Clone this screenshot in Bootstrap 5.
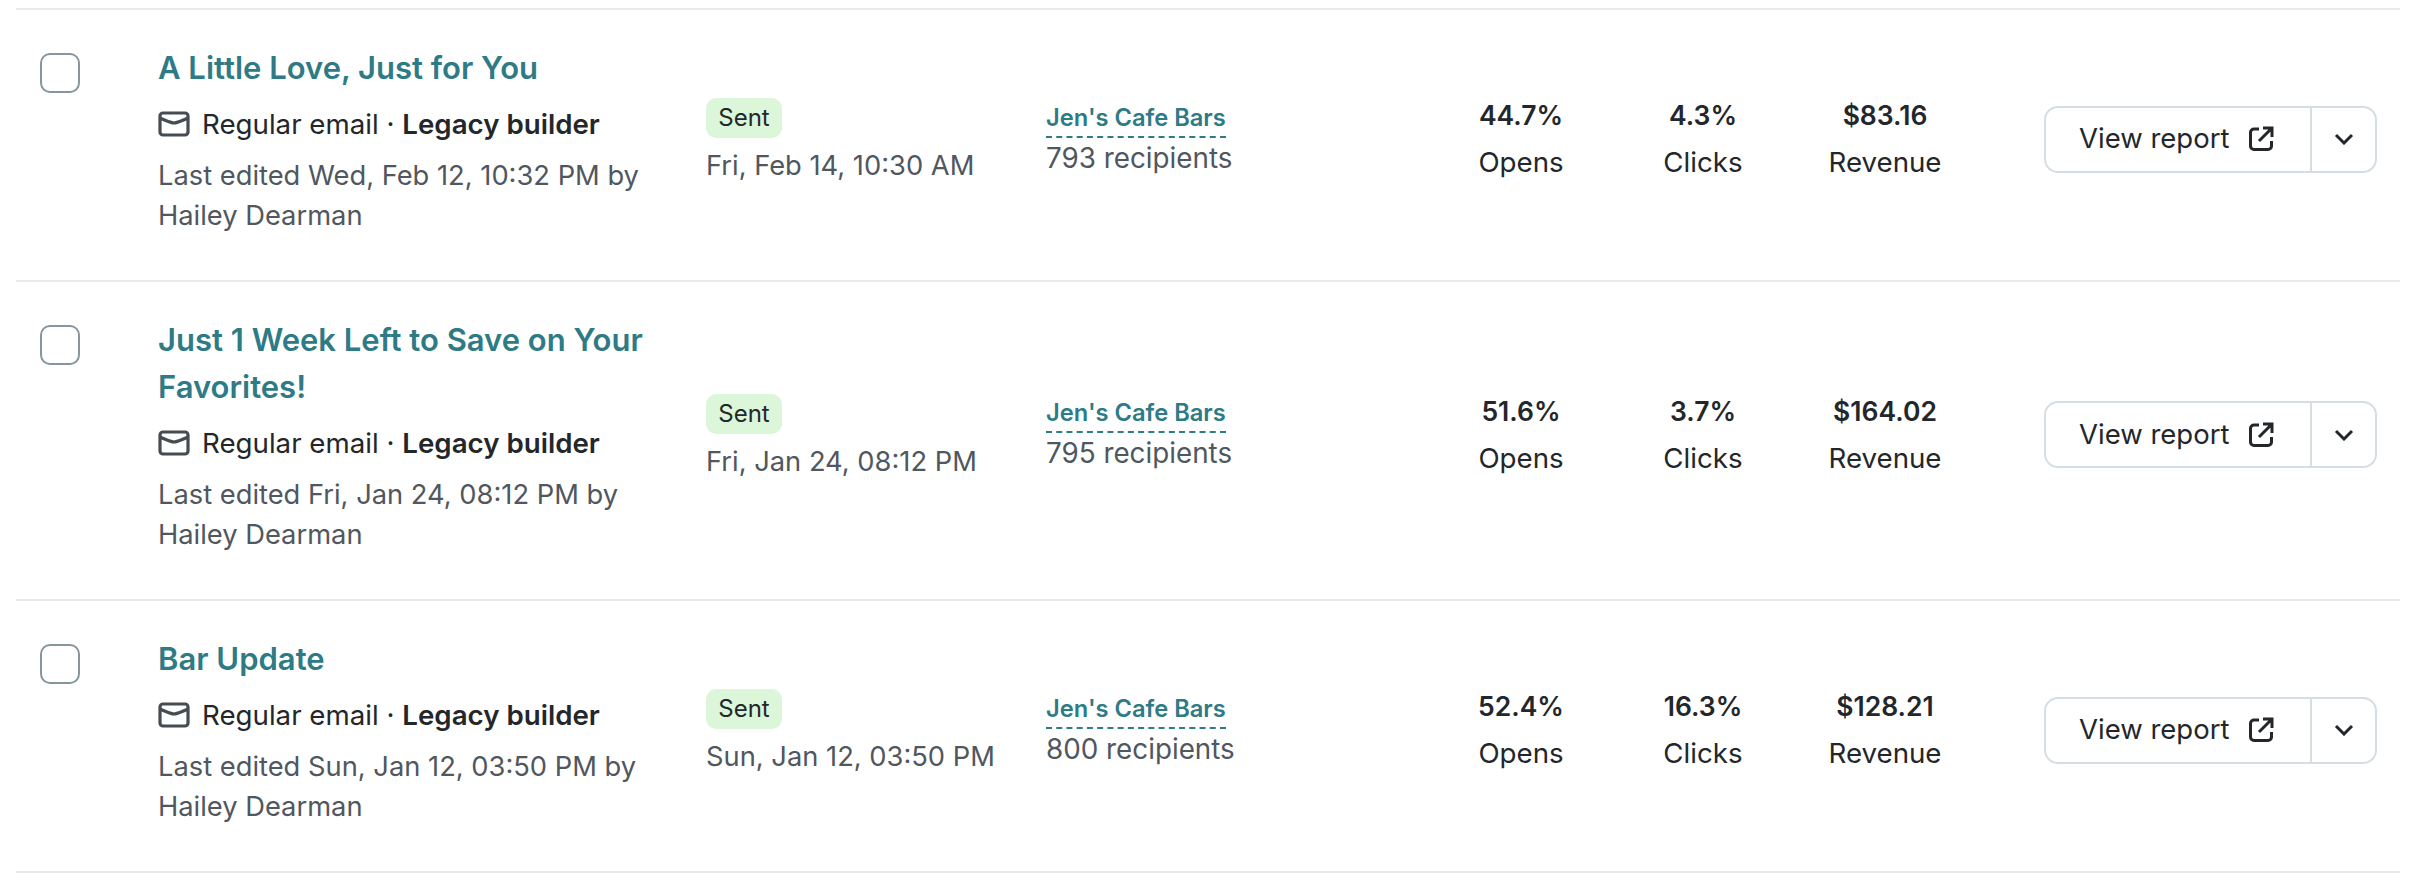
<!DOCTYPE html>
<html>
  <head>
    <title>Campaigns</title>
    <link rel="stylesheet" href="https://cdn.jsdelivr.net/npm/bootstrap@5.3.3/dist/css/bootstrap.min.css" />
    <style>
      body {
        font-family: Inter, "Liberation Sans", sans-serif;
        color: #23272b;
        background: #fff;
      }
      .camp-list {
        margin: 8px 36px 0 16px;
        border-top: 2px solid #e6ebef;
      }
      .camp-row {
        border-bottom: 2px solid #e6ebef;
        padding-left: 24px;
      }
      .camp-check {
        width: 40px;
        height: 40px;
        margin-top: 43px;
        margin-right: 78px;
        border: 2px solid #87959e;
        border-radius: 10px;
        flex: none;
      }
      .camp-main {
        width: 548px;
        flex: none;
        padding: 34px 0 44px;
      }
      .camp-title {
        font-size: 31px;
        font-weight: 600;
        line-height: 47px;
        color: #2e7b86;
        width: 500px;
      }
      .camp-type {
        font-size: 27.7px;
        line-height: 42px;
        margin-top: 12px;
      }
      .type-icon {
        margin-right: 12px;
      }
      .camp-edited {
        font-size: 27.3px;
        line-height: 40px;
        color: #50575e;
        margin-top: 11px;
        width: 490px;
      }
      .camp-status {
        width: 340px;
        flex: none;
        padding-bottom: 6px;
      }
      .sent-tag {
        width: 76px;
        height: 40px;
        background: #dcf6da;
        border-radius: 10px;
        font-size: 24px;
      }
      .camp-date {
        font-size: 27.3px;
        line-height: 40px;
        color: #50575e;
        margin-top: 8px;
      }
      .camp-aud {
        width: 384px;
        flex: none;
        padding-bottom: 12px;
      }
      .aud-name {
        font-size: 23.7px;
        font-weight: 600;
        line-height: 33px;
        padding-bottom: 2px;
        color: #2e7b86;
        border-bottom: 2px dashed #2e7b86;
      }
      .aud-count {
        font-size: 27.8px;
        line-height: 40px;
        color: #50575e;
      }
      .camp-stat {
        width: 182px;
        flex: none;
        padding-bottom: 12px;
        text-align: center;
        font-size: 27.7px;
        line-height: 47px;
      }
      .camp-stat b {
        display: block;
        font-size: 26.5px;
        font-weight: 600;
      }
      .camp-btns {
        width: 333px;
        height: 67px;
        margin-left: 68px;
        margin-bottom: 12px;
        border: 2px solid #d6dee3;
        border-radius: 14px;
        flex: none;
        font-size: 27.5px;
      }
      .btn-report {
        width: 266px;
        padding-left: 33px;
        border-right: 2px solid #d6dee3;
        gap: 19px;
      }
      .btn-more {
        flex: 1;
      }
    </style>
  </head>
  <body>
    <div class="camp-list" id="list"></div>

    <script>
      const campaigns = [
        {
          title: "A Little Love, Just for You",
          edited: "Last edited Wed, Feb 12, 10:32 PM by Hailey Dearman",
          date: "Fri, Feb 14, 10:30 AM",
          count: "793 recipients",
          opens: "44.7%",
          clicks: "4.3%",
          revenue: "$83.16",
        },
        {
          title: "Just 1 Week Left to Save on Your Favorites!",
          edited: "Last edited Fri, Jan 24, 08:12 PM by Hailey Dearman",
          date: "Fri, Jan 24, 08:12 PM",
          count: "795 recipients",
          opens: "51.6%",
          clicks: "3.7%",
          revenue: "$164.02",
        },
        {
          title: "Bar Update",
          edited: "Last edited Sun, Jan 12, 03:50 PM by Hailey Dearman",
          date: "Sun, Jan 12, 03:50 PM",
          count: "800 recipients",
          opens: "52.4%",
          clicks: "16.3%",
          revenue: "$128.21",
        },
      ];

      const list = document.querySelector("#list");

      for (let i = 0; i < campaigns.length; i++) {
        const c = campaigns[i];
        const row = document.createElement("div");
        row.className = "camp-row d-flex align-items-center";
        row.innerHTML = `
          <div class="camp-check align-self-start"></div>
          <div class="camp-main">
            <div class="camp-title">${c.title}</div>
            <div class="camp-type d-flex align-items-center">
              <svg class="type-icon" width="32" height="26" viewBox="0 0 32 26" fill="none" stroke="#454c53" stroke-width="3.200">
                <rect x="2" y="2" width="28" height="22" rx="3"></rect>
                <path d="M2 7 C9 10 12 12 16 12 C20 12 23 10 30 7"></path>
              </svg>
              <span>Regular email · <span class="fw-semibold">Legacy builder</span></span>
            </div>
            <div class="camp-edited">${c.edited}</div>
          </div>
          <div class="camp-status">
            <div class="sent-tag d-flex align-items-center justify-content-center">Sent</div>
            <div class="camp-date">${c.date}</div>
          </div>
          <div class="camp-aud">
            <div><span class="aud-name d-inline-block">Jen's Cafe Bars</span></div>
            <div class="aud-count">${c.count}</div>
          </div>
          <div class="camp-stat"><b>${c.opens}</b>Opens</div>
          <div class="camp-stat"><b>${c.clicks}</b>Clicks</div>
          <div class="camp-stat"><b>${c.revenue}</b>Revenue</div>
          <div class="camp-btns d-flex">
            <div class="btn-report d-flex align-items-center">
              <span>View report</span>
              <svg width="26" height="26" viewBox="0 0 26 26" fill="none" stroke="#23272b" stroke-width="3">
                <path d="M11 3 H6 a3.500 3.500 0 0 0 -3.500 3.500 V20 a3.500 3.500 0 0 0 3.500 3.500 H20 a3.500 3.500 0 0 0 3.500 -3.500 V15"></path>
                <path d="M11 15 L23 3 M15 2 H24 V11"></path>
              </svg>
            </div>
            <div class="btn-more d-flex align-items-center justify-content-center">
              <svg width="20" height="12" viewBox="0 0 20 12" fill="none" stroke="#23272b" stroke-width="3">
                <path d="M2 2 L10 10 L18 2"></path>
              </svg>
            </div>
          </div>`;
        list.appendChild(row);
      }
    </script>
    <script src="https://cdn.jsdelivr.net/npm/bootstrap@5.3.3/dist/js/bootstrap.bundle.min.js"></script>
  </body>
</html>
